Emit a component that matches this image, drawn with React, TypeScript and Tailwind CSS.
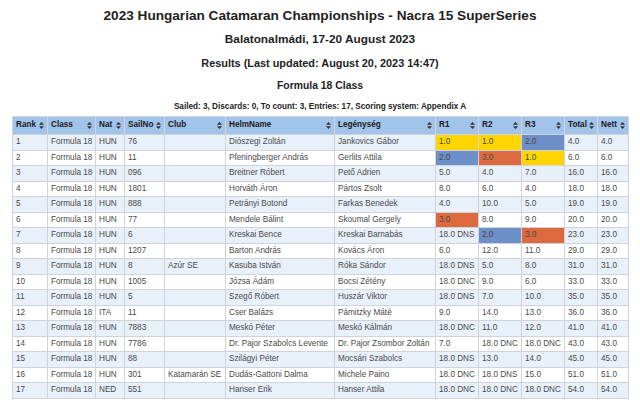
import React from "react";

type Hl = "g" | "b" | "o" | undefined;
type Race = [string, Hl?];
type Row = {
  rank: string;
  nat: string;
  sail: string;
  club: string;
  helm: string;
  crew: string;
  r: Race[];
  total: string;
  nett: string;
};

const rows: Row[] = [
  { rank: "1", nat: "HUN", sail: "76", club: "", helm: "Diószegi Zoltán", crew: "Jankovics Gábor", r: [["1.0", "g"], ["1.0", "g"], ["2.0", "b"]], total: "4.0", nett: "4.0" },
  { rank: "2", nat: "HUN", sail: "11", club: "", helm: "Pfeningberger András", crew: "Gerlits Attila", r: [["2.0", "b"], ["3.0", "o"], ["1.0", "g"]], total: "6.0", nett: "6.0" },
  { rank: "3", nat: "HUN", sail: "096", club: "", helm: "Breitner Róbert", crew: "Pető Adrien", r: [["5.0"], ["4.0"], ["7.0"]], total: "16.0", nett: "16.0" },
  { rank: "4", nat: "HUN", sail: "1801", club: "", helm: "Horváth Áron", crew: "Pártos Zsolt", r: [["8.0"], ["6.0"], ["4.0"]], total: "18.0", nett: "18.0" },
  { rank: "5", nat: "HUN", sail: "888", club: "", helm: "Petrányi Botond", crew: "Farkas Benedek", r: [["4.0"], ["10.0"], ["5.0"]], total: "19.0", nett: "19.0" },
  { rank: "6", nat: "HUN", sail: "77", club: "", helm: "Mendele Bálint", crew: "Skoumal Gergely", r: [["3.0", "o"], ["8.0"], ["9.0"]], total: "20.0", nett: "20.0" },
  { rank: "7", nat: "HUN", sail: "6", club: "", helm: "Kreskai Bence", crew: "Kreskai Barnabás", r: [["18.0 DNS"], ["2.0", "b"], ["3.0", "o"]], total: "23.0", nett: "23.0" },
  { rank: "8", nat: "HUN", sail: "1207", club: "", helm: "Barton András", crew: "Kovács Áron", r: [["6.0"], ["12.0"], ["11.0"]], total: "29.0", nett: "29.0" },
  { rank: "9", nat: "HUN", sail: "8", club: "Azúr SE", helm: "Kasuba István", crew: "Róka Sándor", r: [["18.0 DNS"], ["5.0"], ["8.0"]], total: "31.0", nett: "31.0" },
  { rank: "10", nat: "HUN", sail: "1005", club: "", helm: "Józsa Ádám", crew: "Bocsi Zétény", r: [["18.0 DNC"], ["9.0"], ["6.0"]], total: "33.0", nett: "33.0" },
  { rank: "11", nat: "HUN", sail: "5", club: "", helm: "Szegő Róbert", crew: "Huszár Viktor", r: [["18.0 DNS"], ["7.0"], ["10.0"]], total: "35.0", nett: "35.0" },
  { rank: "12", nat: "ITA", sail: "11", club: "", helm: "Cser Balázs", crew: "Pámitzky Máté", r: [["9.0"], ["14.0"], ["13.0"]], total: "36.0", nett: "36.0" },
  { rank: "13", nat: "HUN", sail: "7883", club: "", helm: "Meskó Péter", crew: "Meskó Kálmán", r: [["18.0 DNC"], ["11.0"], ["12.0"]], total: "41.0", nett: "41.0" },
  { rank: "14", nat: "HUN", sail: "7786", club: "", helm: "Dr. Pajor Szabolcs Levente", crew: "Dr. Pajor Zsombor Zoltán", r: [["7.0"], ["18.0 DNC"], ["18.0 DNC"]], total: "43.0", nett: "43.0" },
  { rank: "15", nat: "HUN", sail: "88", club: "", helm: "Szilágyi Péter", crew: "Mocsári Szabolcs", r: [["18.0 DNS"], ["13.0"], ["14.0"]], total: "45.0", nett: "45.0" },
  { rank: "16", nat: "HUN", sail: "301", club: "Katamarán SE", helm: "Dudás-Gattoni Dalma", crew: "Michele Paino", r: [["18.0 DNC"], ["18.0 DNS"], ["15.0"]], total: "51.0", nett: "51.0" },
  { rank: "17", nat: "NED", sail: "551", club: "", helm: "Hanser Erik", crew: "Hanser Attila", r: [["18.0 DNC"], ["18.0 DNC"], ["18.0 DNC"]], total: "54.0", nett: "54.0" },
];

const headers = ["Rank", "Class", "Nat", "SailNo", "Club", "HelmName", "Legénység", "R1", "R2", "R3", "Total", "Nett"];

function SortIcon() {
  return (
    <svg width="5" height="7" viewBox="0 0 5 7" className="shrink-0">
      <path d="M2.5 0 L5 2.8 L0 2.8 Z" fill="#333" />
      <path d="M0 4.2 L5 4.2 L2.5 7 Z" fill="#333" />
    </svg>
  );
}

const hlClass: Record<string, string> = {
  g: "bg-[#ffd500]",
  b: "bg-[#6b8fc6]",
  o: "bg-[#dd6a3f]",
};

function Cell({ children, bg, hl }: { children?: React.ReactNode; bg: string; hl?: Hl }) {
  return (
    <div
      className={`h-[15.5px] flex items-center pl-[3px] border-r border-b border-[#d0d4da] whitespace-nowrap overflow-visible ${hl ? hlClass[hl] : bg}`}
    >
      {children}
    </div>
  );
}

export default function App() {
  return (
    <div className="w-[640px] h-[410px] bg-white overflow-hidden font-['Liberation_Sans',Arial,sans-serif] text-[#222]">
      <div className="h-[32px] flex items-center justify-center font-bold text-[13.6px]">
        2023 Hungarian Catamaran Championships - Nacra 15 SuperSeries
      </div>
      <div className="h-[16px] flex items-center justify-center font-bold text-[11.8px]">
        Balatonalmádi, 17-20 August 2023
      </div>
      <div className="h-[30px] flex items-center justify-center font-bold text-[10.9px]">
        Results (Last updated: August 20, 2023 14:47)
      </div>
      <div className="h-[16px] flex items-center justify-center font-bold text-[10.4px]">
        Formula 18 Class
      </div>
      <div className="h-[22px] pt-[4px] flex items-center justify-center font-bold text-[8.2px]">
        Sailed: 3, Discards: 0, To count: 3, Entries: 17, Scoring system: Appendix A
      </div>
      <div className="ml-[12px] w-[617px] grid grid-cols-[35px_48px_29px_40px_61px_109px_101px_43px_43px_43px_33px_31px] border-l border-t border-[#d0d4da] text-[8.2px] text-[#4a4a4a]">
        {headers.map((h) => (
          <div
            key={h}
            className="h-[18px] flex items-center justify-between pl-[3px] pr-[3px] bg-[#a2c3ea] border-r border-b border-[#d0d4da] font-bold text-[#1a1a1a] whitespace-nowrap"
          >
            <span>{h}</span>
            <SortIcon />
          </div>
        ))}
        {rows.map((r, i) => {
          const bg = i % 2 === 0 ? "bg-[#e8f0fa]" : "bg-white";
          return (
            <React.Fragment key={r.rank}>
              <Cell bg={bg}>{r.rank}</Cell>
              <Cell bg={bg}>Formula 18</Cell>
              <Cell bg={bg}>{r.nat}</Cell>
              <Cell bg={bg}>{r.sail}</Cell>
              <Cell bg={bg}>{r.club}</Cell>
              <Cell bg={bg}>{r.helm}</Cell>
              <Cell bg={bg}>{r.crew}</Cell>
              {r.r.map(([v, hl], k) => (
                <Cell key={k} bg={bg} hl={hl}>
                  {v}
                </Cell>
              ))}
              <Cell bg={bg}>{r.total}</Cell>
              <Cell bg={bg}>{r.nett}</Cell>
            </React.Fragment>
          );
        })}
      </div>
    </div>
  );
}
